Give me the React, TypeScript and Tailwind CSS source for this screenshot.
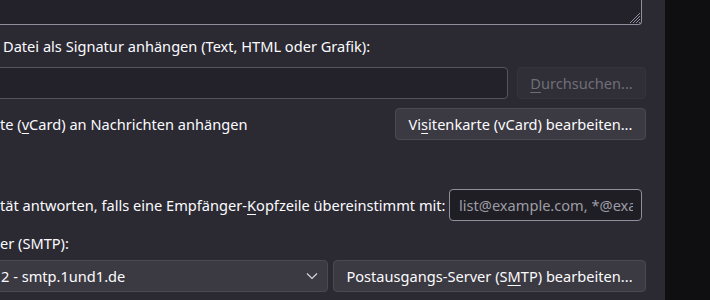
import React from "react";

function Grip() {
  return (
    <svg
      className="absolute right-[1px] bottom-[1px] w-[10px] h-[10px]"
      viewBox="0 0 10 10"
      aria-hidden="true"
    >
      <path d="M10 0L0 10M10 3L3 10M10 6L6 10M10 9L9 10" stroke="#8f8f9d" strokeWidth="1" />
    </svg>
  );
}

export default function App() {
  return (
    <div
      className="w-[710px] h-[300px] overflow-hidden flex text-[#fbfbfe] text-[14.6px] leading-[20px]"
      style={{ fontFamily: '"Noto Sans", "Open Sans", sans-serif' }}
    >
      <div className="w-[665px] bg-[#2b2a33] flex flex-col overflow-hidden">
        {/* signature textarea (scrolled, top cut off) */}
        <div className="relative ml-[-10px] w-[652px] h-[25px] bg-[#23222b] border border-t-0 border-[#8f8f9d] rounded-br-[4px]">
          <Grip />
        </div>

        <div className="mt-[11px] pl-[3px] whitespace-nowrap">
          Datei als Signatur anhängen (Text, HTML oder Grafik):
        </div>

        <div className="mt-[11px] flex items-center">
          <div className="ml-[-10px] w-[518px] h-[32px] bg-[#23222b] border border-[#55545c] rounded-[4px]" />
          <button className="ml-[9px] w-[129px] h-[32px] rounded-[4px] bg-[#302f37] border border-[#35343c] text-[#6f6e77]">
            <span className="underline underline-offset-[3px]">D</span>urchsuchen...
          </button>
        </div>

        <div className="mt-[9px] flex items-center justify-between w-[646px]">
          <span className="whitespace-nowrap">
            te (<span className="underline underline-offset-[3px]">v</span>Card) an Nachrichten anhängen
          </span>
          <button className="w-[251px] h-[32px] rounded-[4px] bg-[#3b3a42] border border-[#4a4951] text-[#fbfbfe]">
            Vi<span className="underline underline-offset-[3px]">s</span>itenkarte (vCard) bearbeiten...
          </button>
        </div>

        <div className="mt-[49px] flex items-center w-[642px] justify-between">
          <span className="whitespace-nowrap">
            tät antworten, falls eine Empfänger-
            <span className="underline underline-offset-[3px]">K</span>opfzeile übereinstimmt mit:
          </span>
          <div className="w-[193px] shrink-0 h-[32px] bg-[#1f1e25] border border-[#8f8f9d] rounded-[4px] flex items-center pl-[9px] pr-[8px]">
            <div className="flex-1 overflow-hidden">
              <span className="whitespace-nowrap text-[#9d9ca4]">list@example.com, *@example.com</span>
            </div>
          </div>
        </div>

        <div className="mt-[12px] whitespace-nowrap">er (SMTP):</div>

        <div className="mt-[7px] flex items-center">
          <div className="ml-[-10px] w-[338px] h-[32px] rounded-[4px] bg-[#3b3a42] border border-[#4a4951] flex items-center pl-[10px] pr-[8px]">
            <span className="flex-1 whitespace-nowrap">2 - smtp.1und1.de</span>
            <svg className="w-[12px] h-[8px] mr-[1px]" viewBox="0 0 12 8" aria-hidden="true">
              <path d="M1 1.5L6 6.5L11 1.5" fill="none" stroke="#d6d6dc" strokeWidth="1.2" />
            </svg>
          </div>
          <button className="ml-[5px] w-[313px] h-[32px] rounded-[4px] bg-[#3b3a42] border border-[#4a4951] text-[#fbfbfe]">
            Postausgangs-Server (S<span className="underline underline-offset-[3px]">M</span>TP) bearbeiten...
          </button>
        </div>
      </div>
      <div className="flex-1 bg-[#0f0f12]" />
    </div>
  );
}
